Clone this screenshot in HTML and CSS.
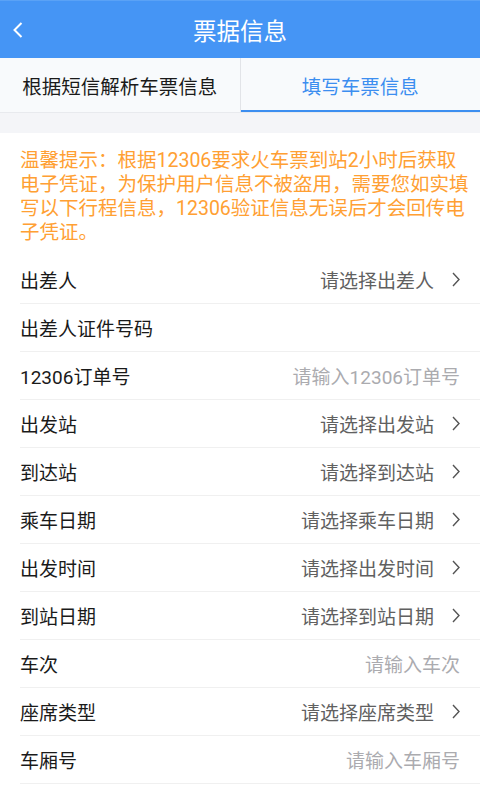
FILE: index.html
```html
<!DOCTYPE html>
<html lang="zh-CN">
<head>
    <meta charset="UTF-8">
    <meta name="viewport" content="width=device-width, initial-scale=1.0">
    <title>票据信息</title>
    <link rel="stylesheet" href="styles.css">
</head>
<body>
    <div class="header">
        <span class="back">
            <svg width="10" height="16" viewBox="0 0 10 16"><polyline points="8.5,1 1.5,8 8.5,15" fill="none" stroke="#fff" stroke-width="2"/></svg>
        </span>
        <h1>票据信息</h1>
    </div>

    <div class="tabs">
        <div class="tab">根据短信解析车票信息</div>
        <div class="tab active">填写车票信息</div>
    </div>

    <div class="gap"></div>

    <div class="content">
        <p class="notice">温馨提示：根据12306要求火车票到站2小时后获取<br>电子凭证，为保护用户信息不被盗用，需要您如实填<br>写以下行程信息，12306验证信息无误后才会回传电<br>子凭证。</p>

        <div class="row">
            <span class="label">出差人</span>
            <span class="value">请选择出差人<svg class="arrow" width="8" height="15" viewBox="0 0 8 15"><polyline points="1,1 7,7.5 1,14" fill="none" stroke="#555" stroke-width="1.4"/></svg></span>
        </div>
        <div class="row">
            <span class="label">出差人证件号码</span>
        </div>
        <div class="row">
            <span class="label">12306订单号</span>
            <span class="value placeholder">请输入12306订单号</span>
        </div>
        <div class="row">
            <span class="label">出发站</span>
            <span class="value">请选择出发站<svg class="arrow" width="8" height="15" viewBox="0 0 8 15"><polyline points="1,1 7,7.5 1,14" fill="none" stroke="#555" stroke-width="1.4"/></svg></span>
        </div>
        <div class="row">
            <span class="label">到达站</span>
            <span class="value">请选择到达站<svg class="arrow" width="8" height="15" viewBox="0 0 8 15"><polyline points="1,1 7,7.5 1,14" fill="none" stroke="#555" stroke-width="1.4"/></svg></span>
        </div>
        <div class="row">
            <span class="label">乘车日期</span>
            <span class="value">请选择乘车日期<svg class="arrow" width="8" height="15" viewBox="0 0 8 15"><polyline points="1,1 7,7.5 1,14" fill="none" stroke="#555" stroke-width="1.4"/></svg></span>
        </div>
        <div class="row">
            <span class="label">出发时间</span>
            <span class="value">请选择出发时间<svg class="arrow" width="8" height="15" viewBox="0 0 8 15"><polyline points="1,1 7,7.5 1,14" fill="none" stroke="#555" stroke-width="1.4"/></svg></span>
        </div>
        <div class="row">
            <span class="label">到站日期</span>
            <span class="value">请选择到站日期<svg class="arrow" width="8" height="15" viewBox="0 0 8 15"><polyline points="1,1 7,7.5 1,14" fill="none" stroke="#555" stroke-width="1.4"/></svg></span>
        </div>
        <div class="row">
            <span class="label">车次</span>
            <span class="value placeholder">请输入车次</span>
        </div>
        <div class="row">
            <span class="label">座席类型</span>
            <span class="value">请选择座席类型<svg class="arrow" width="8" height="15" viewBox="0 0 8 15"><polyline points="1,1 7,7.5 1,14" fill="none" stroke="#555" stroke-width="1.4"/></svg></span>
        </div>
        <div class="row">
            <span class="label">车厢号</span>
            <span class="value placeholder">请输入车厢号</span>
        </div>
    </div>
</body>
</html>
```

FILE: styles.css
```css
body {
    font-family: Roboto, "Noto Sans CJK SC", sans-serif;
    margin: 0;
    padding: 0;
    background-color: #fff;
    color: #1a1a1a;
}

.header {
    height: 57px;
    border-top: 1px solid #5aa2f6;
    background-color: #4595f5;
    display: flex;
    align-items: center;
    justify-content: center;
    position: relative;
}

.header h1 {
    margin: 0;
    font-size: 23.5px;
    font-weight: normal;
    color: #fff;
}

.back {
    position: absolute;
    left: 13px;
    top: 21px;
    line-height: 0;
}

.tabs {
    display: flex;
    height: 54px;
    background-color: #f8fafc;
    border-bottom: 1px solid #e8eaee;
}

.tab {
    flex: 1;
    display: flex;
    align-items: center;
    justify-content: center;
    font-size: 19.5px;
    color: #1a1a1a;
}

.tab + .tab {
    border-left: 1px solid #e2e4e8;
}

.tab.active {
    color: #3c8ef0;
    box-shadow: inset 0 -2px 0 #3c8ef0;
}

.gap {
    height: 20px;
    background-color: #f4f5f8;
}

.notice {
    margin: 0;
    padding: 16px 0 11px 20px;
    font-size: 19.5px;
    line-height: 24px;
    color: #ffa033;
    white-space: nowrap;
}

.row {
    height: 47px;
    margin-left: 20px;
    padding-right: 20px;
    border-bottom: 1px solid #f0f0f0;
    display: flex;
    align-items: center;
    justify-content: space-between;
    font-size: 19px;
}

.label {
    color: #1a1a1a;
}

.value {
    display: flex;
    align-items: center;
    color: #606060;
    font-size: 19px;
}

.value.placeholder {
    color: #ababaf;
}

.arrow {
    margin-left: 18px;
}
```
